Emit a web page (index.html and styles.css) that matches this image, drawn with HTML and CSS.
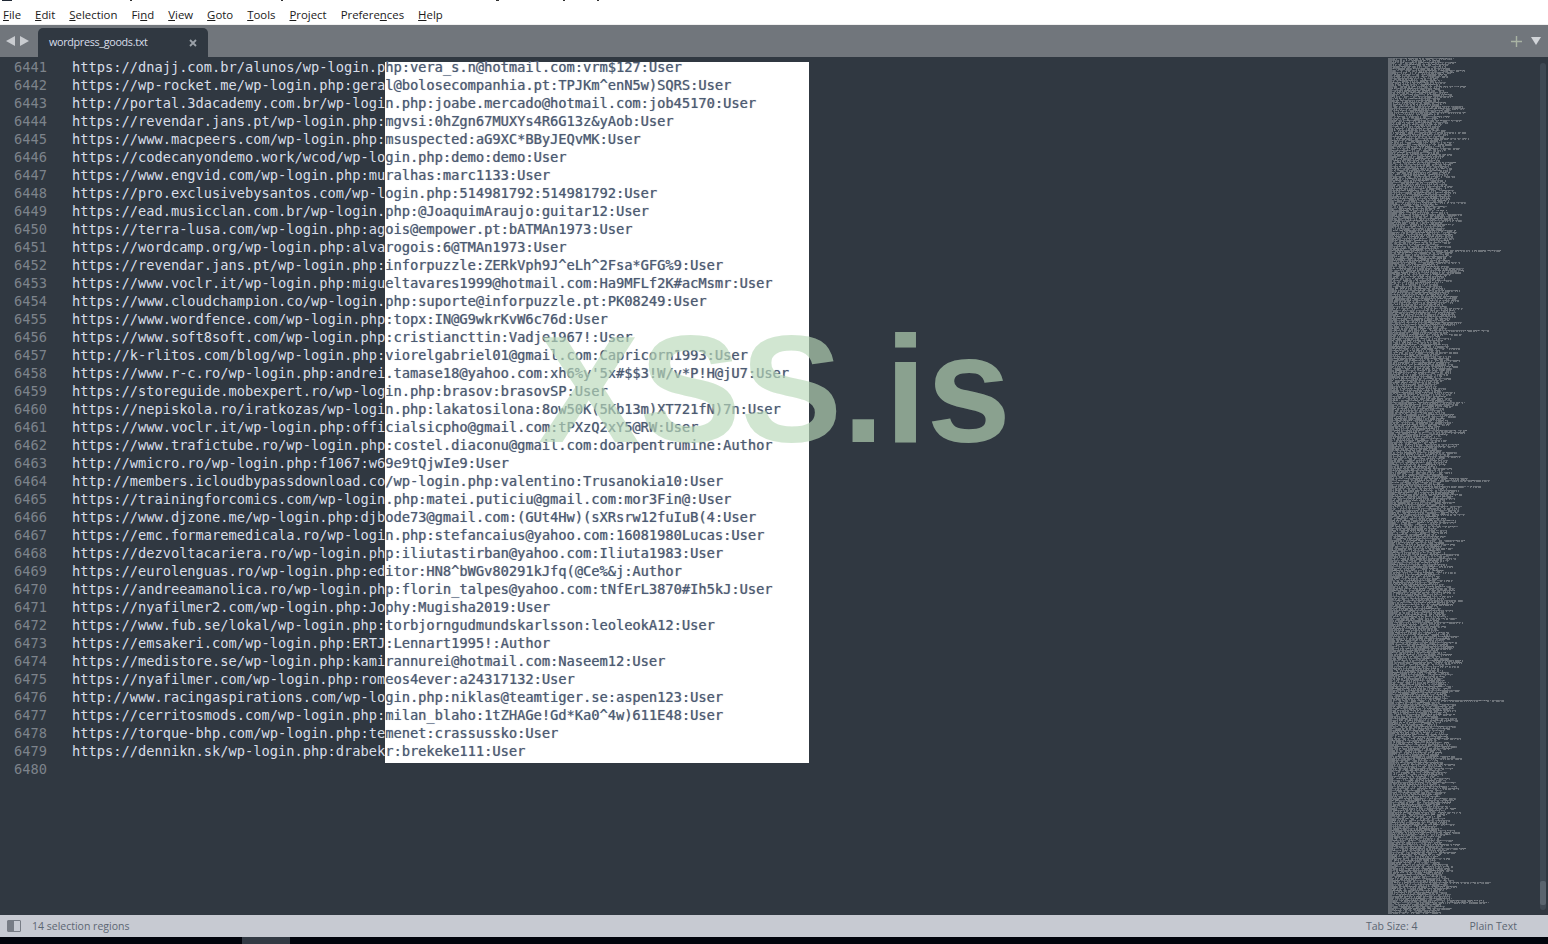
FILE: index.html
```html
<!DOCTYPE html>
<html lang="en">
<head>
<meta charset="utf-8">
<title>wordpress_goods.txt - Sublime Text</title>
<link rel="stylesheet" href="styles.css">
</head>
<body>
<div class="window">
  <div class="titlestrip"></div>
  <nav class="menubar">
    <span><u>F</u>ile</span><span><u>E</u>dit</span><span><u>S</u>election</span><span>Fi<u>n</u>d</span><span><u>V</u>iew</span><span><u>G</u>oto</span><span><u>T</u>ools</span><span><u>P</u>roject</span><span>Prefere<u>n</u>ces</span><span><u>H</u>elp</span>
  </nav>
  <div class="tabbar">
    <div class="tabnav">
      <svg width="9" height="10" viewBox="0 0 9 10"><path d="M9 0v10L0 5z"/></svg>
      <svg width="9" height="10" viewBox="0 0 9 10"><path d="M0 0v10l9-5z"/></svg>
    </div>
    <div class="tab"><span class="tabname">wordpress_goods.txt</span>
      <svg class="tabclose" width="8" height="8" viewBox="0 0 8 8"><path d="M1 1l6 6M7 1L1 7"/></svg>
    </div>
    <div class="tabactions">
      <svg class="tabplus" width="11" height="11" viewBox="0 0 11 11"><path d="M5.5 0v11M0 5.5h11"/></svg>
      <svg class="tabdrop" width="10" height="8" viewBox="0 0 10 8"><path d="M0 0h10L5 8z"/></svg>
    </div>
  </div>
  <main class="editor">
    <div class="selectionpanel"></div>
    <div class="lines">
      <div class="line"><span class="num">6441</span><span class="code">https://dnajj.com.br/alunos/wp-login.p<span class="over">hp:vera_s.n@hotmail.com:vrm$127:User</span></span></div>
      <div class="line"><span class="num">6442</span><span class="code">https://wp-rocket.me/wp-login.php:gera<span class="over">l@bolosecompanhia.pt:TPJKm^enN5w)SQRS:User</span></span></div>
      <div class="line"><span class="num">6443</span><span class="code">http://portal.3dacademy.com.br/wp-logi<span class="over">n.php:joabe.mercado@hotmail.com:job45170:User</span></span></div>
      <div class="line"><span class="num">6444</span><span class="code">https://revendar.jans.pt/wp-login.php:<span class="over">mgvsi:0hZgn67MUXYs4R6G13z&amp;yAob:User</span></span></div>
      <div class="line"><span class="num">6445</span><span class="code">https://www.macpeers.com/wp-login.php:<span class="over">msuspected:aG9XC*BByJEQvMK:User</span></span></div>
      <div class="line"><span class="num">6446</span><span class="code">https://codecanyondemo.work/wcod/wp-lo<span class="over">gin.php:demo:demo:User</span></span></div>
      <div class="line"><span class="num">6447</span><span class="code">https://www.engvid.com/wp-login.php:mu<span class="over">ralhas:marc1133:User</span></span></div>
      <div class="line"><span class="num">6448</span><span class="code">https://pro.exclusivebysantos.com/wp-l<span class="over">ogin.php:514981792:514981792:User</span></span></div>
      <div class="line"><span class="num">6449</span><span class="code">https://ead.musicclan.com.br/wp-login.<span class="over">php:@JoaquimAraujo:guitar12:User</span></span></div>
      <div class="line"><span class="num">6450</span><span class="code">https://terra-lusa.com/wp-login.php:ag<span class="over">ois@empower.pt:bATMAn1973:User</span></span></div>
      <div class="line"><span class="num">6451</span><span class="code">https://wordcamp.org/wp-login.php:alva<span class="over">rogois:6@TMAn1973:User</span></span></div>
      <div class="line"><span class="num">6452</span><span class="code">https://revendar.jans.pt/wp-login.php:<span class="over">inforpuzzle:ZERkVph9J^eLh^2Fsa*GFG%9:User</span></span></div>
      <div class="line"><span class="num">6453</span><span class="code">https://www.voclr.it/wp-login.php:migu<span class="over">eltavares1999@hotmail.com:Ha9MFLf2K#acMsmr:User</span></span></div>
      <div class="line"><span class="num">6454</span><span class="code">https://www.cloudchampion.co/wp-login.<span class="over">php:suporte@inforpuzzle.pt:PK08249:User</span></span></div>
      <div class="line"><span class="num">6455</span><span class="code">https://www.wordfence.com/wp-login.php<span class="over">:topx:IN@G9wkrKvW6c76d:User</span></span></div>
      <div class="line"><span class="num">6456</span><span class="code">https://www.soft8soft.com/wp-login.php<span class="over">:cristiancttin:Vadje1967!:User</span></span></div>
      <div class="line"><span class="num">6457</span><span class="code">http://k-rlitos.com/blog/wp-login.php:<span class="over">viorelgabriel01@gmail.com:Capricorn1993:User</span></span></div>
      <div class="line"><span class="num">6458</span><span class="code">https://www.r-c.ro/wp-login.php:andrei<span class="over">.tamase18@yahoo.com:xh6%y'5x#$$3!W/v*P!H@jU7:User</span></span></div>
      <div class="line"><span class="num">6459</span><span class="code">https://storeguide.mobexpert.ro/wp-log<span class="over">in.php:brasov:brasovSP:User</span></span></div>
      <div class="line"><span class="num">6460</span><span class="code">https://nepiskola.ro/iratkozas/wp-logi<span class="over">n.php:lakatosilona:8ow50K(5Kb13m)XT721fN)7n:User</span></span></div>
      <div class="line"><span class="num">6461</span><span class="code">https://www.voclr.it/wp-login.php:offi<span class="over">cialsicpho@gmail.com:tPXzQ2xY5@RW:User</span></span></div>
      <div class="line"><span class="num">6462</span><span class="code">https://www.trafictube.ro/wp-login.php<span class="over">:costel.diaconu@gmail.com:doarpentrumine:Author</span></span></div>
      <div class="line"><span class="num">6463</span><span class="code">http://wmicro.ro/wp-login.php:f1067:w6<span class="over">9e9tQjwIe9:User</span></span></div>
      <div class="line"><span class="num">6464</span><span class="code">http://members.icloudbypassdownload.co<span class="over">/wp-login.php:valentino:Trusanokia10:User</span></span></div>
      <div class="line"><span class="num">6465</span><span class="code">https://trainingforcomics.com/wp-login<span class="over">.php:matei.puticiu@gmail.com:mor3Fin@:User</span></span></div>
      <div class="line"><span class="num">6466</span><span class="code">https://www.djzone.me/wp-login.php:djb<span class="over">ode73@gmail.com:(GUt4Hw)(sXRsrw12fuIuB(4:User</span></span></div>
      <div class="line"><span class="num">6467</span><span class="code">https://emc.formaremedicala.ro/wp-logi<span class="over">n.php:stefancaius@yahoo.com:16081980Lucas:User</span></span></div>
      <div class="line"><span class="num">6468</span><span class="code">https://dezvoltacariera.ro/wp-login.ph<span class="over">p:iliutastirban@yahoo.com:Iliuta1983:User</span></span></div>
      <div class="line"><span class="num">6469</span><span class="code">https://eurolenguas.ro/wp-login.php:ed<span class="over">itor:HN8^bWGv80291kJfq(@Ce%&amp;j:Author</span></span></div>
      <div class="line"><span class="num">6470</span><span class="code">https://andreeamanolica.ro/wp-login.ph<span class="over">p:florin_talpes@yahoo.com:tNfErL3870#Ih5kJ:User</span></span></div>
      <div class="line"><span class="num">6471</span><span class="code">https://nyafilmer2.com/wp-login.php:Jo<span class="over">phy:Mugisha2019:User</span></span></div>
      <div class="line"><span class="num">6472</span><span class="code">https://www.fub.se/lokal/wp-login.php:<span class="over">torbjorngudmundskarlsson:leoleokA12:User</span></span></div>
      <div class="line"><span class="num">6473</span><span class="code">https://emsakeri.com/wp-login.php:ERTJ<span class="over">:Lennart1995!:Author</span></span></div>
      <div class="line"><span class="num">6474</span><span class="code">https://medistore.se/wp-login.php:kami<span class="over">rannurei@hotmail.com:Naseem12:User</span></span></div>
      <div class="line"><span class="num">6475</span><span class="code">https://nyafilmer.com/wp-login.php:rom<span class="over">eos4ever:a24317132:User</span></span></div>
      <div class="line"><span class="num">6476</span><span class="code">http://www.racingaspirations.com/wp-lo<span class="over">gin.php:niklas@teamtiger.se:aspen123:User</span></span></div>
      <div class="line"><span class="num">6477</span><span class="code">https://cerritosmods.com/wp-login.php:<span class="over">milan_blaho:1tZHAGe!Gd*Ka0^4w)611E48:User</span></span></div>
      <div class="line"><span class="num">6478</span><span class="code">https://torque-bhp.com/wp-login.php:te<span class="over">menet:crassussko:User</span></span></div>
      <div class="line"><span class="num">6479</span><span class="code">https://dennikn.sk/wp-login.php:drabek<span class="over">r:brekeke111:User</span></span></div>
      <div class="line"><span class="num">6480</span><span class="code"></span></div>
    </div>
    <canvas class="minimap" id="minimap" width="152" height="857"></canvas>
    <div class="scrolltrack"><div class="scrollthumb"></div></div>
    <div class="watermark">XSS.is</div>
  </main>
  <footer class="statusbar">
    <span class="panelicon"></span>
    <span class="statusleft">14 selection regions</span>
    <span class="tabsize">Tab Size: 4</span>
    <span class="syntax">Plain Text</span>
  </footer>
  <div class="taskbar"><span class="taskitem"></span><span class="clock">7:51</span></div>
</div>
<script src="script.js"></script>
</body>
</html>
```
FILE: styles.css
```css
* { box-sizing: border-box; }
html, body { margin: 0; height: 100%; overflow: hidden; }
.window { display: flex; flex-direction: column; width: 1548px; height: 944px; background: #303841; }

.titlestrip {
  height: 2px; flex: none; background-color: #fff;
  background-image:
    linear-gradient(#222a36, #222a36), linear-gradient(#333, #333), linear-gradient(#333, #333),
    linear-gradient(#333, #333), linear-gradient(#333, #333), linear-gradient(#333, #333);
  background-size: 10px 1px, 2px 1px, 2px 1px, 3px 1px, 2px 1px, 2px 1px;
  background-position: 2px 0, 130px 0, 281px 0, 496px 0, 563px 0, 597px 0;
  background-repeat: no-repeat;
}
.menubar {
  height: 23px; flex: none; display: flex; align-items: center; gap: 14px; padding: 3px 0 0 3px;
  background: #fff; border-bottom: 1px solid #f0f0f0;
  font: 11.4px "Open Sans", sans-serif; color: #1a1a1a;
}

.tabbar { height: 32px; flex: none; display: flex; align-items: flex-end; background: #71767c; }
.tabnav { width: 38px; height: 32px; flex: none; display: flex; align-items: center; gap: 5px; padding: 0 0 0 6px; }
.tabnav svg { fill: #c9ccd0; }
.tab {
  width: 170px; height: 29px; flex: none; display: flex; align-items: center; justify-content: space-between;
  padding: 0 11px 2px; background: #303841; border-radius: 5px 5px 0 0;
}
.tabname { font: 10.8px "Open Sans", sans-serif; letter-spacing: -.33px; color: #d8dee9; }
.tabclose { fill: none; stroke: #9ba1a8; stroke-width: 1.8; margin-top: 2px; }
.tabactions { margin-left: auto; height: 32px; display: flex; align-items: center; gap: 9px; padding-right: 7px; }
.tabplus { fill: none; stroke: #a9b3a4; stroke-width: 1.4; }
.tabdrop { fill: #d2d5d9; }

.editor { position: relative; flex: 1; min-height: 0; display: flex; overflow: hidden; background: #303841; }
.selectionpanel { position: absolute; left: 385px; top: 5px; width: 424px; height: 701px; background: #fff; }
.lines {
  position: relative; width: 1388px; flex: none; padding-top: 1px;
  font: 13.7px/18px "DejaVu Sans Mono", monospace; color: #d8dee9;
}
.line { display: flex; height: 18px; white-space: pre; }
.num { width: 47px; flex: none; text-align: right; color: #7d838b; }
.code { margin-left: 25px; }
.over { color: #4b5a72; text-shadow: .4px 0 .7px #7f8ea8; }
.minimap { width: 152px; height: 857px; flex: none; }
.scrolltrack { width: 6px; flex: none; margin: 6px 0 5px 0; background: #3f4953; border-radius: 3px; display: flex; flex-direction: column; justify-content: flex-end; padding-bottom: 5px; }
.scrollthumb { height: 24px; background: #5a646e; border-radius: 2px; }
.watermark {
  position: absolute; left: 538px; top: 256px;
  font: bold 152px/1 "Liberation Sans", Arial, sans-serif; color: rgb(186, 218, 186); opacity: .65;
  white-space: nowrap; pointer-events: none;
}

.statusbar {
  height: 22px; flex: none; display: flex; align-items: center; padding: 0 0 1px 7px; background: #c7cad2;
  font: 10.5px "Open Sans", sans-serif; color: #5c6673;
}
.panelicon { width: 14px; height: 12px; flex: none; margin-top: 1px; border: 1px solid #777c85; border-radius: 1px; background: linear-gradient(90deg, #777c85 50%, transparent 50%); }
.statusleft { margin-left: 11px; }
.tabsize { margin-left: auto; }
.syntax { margin-left: 52px; margin-right: 31px; }

.taskbar { height: 7px; flex: none; display: flex; background: #02040c; overflow: hidden; position: relative; }
.taskitem { width: 48px; height: 7px; margin-left: 242px; background: #333a44; }
.clock { margin-left: 1163px; font: 11px/11px "Open Sans", sans-serif; color: #e8e8e8; padding-top: 5px; }
```
FILE: script.js
```js
(function () {
  var c = document.getElementById('minimap').getContext('2d');
  var state = 20240611;
  function rnd() {
    state = (state + 0x6D2B79F5) | 0;
    var t = Math.imul(state ^ (state >>> 15), 1 | state);
    t = (t + Math.imul(t ^ (t >>> 7), 61 | t)) ^ t;
    return ((t ^ (t >>> 14)) >>> 0) / 4294967296;
  }
  for (var y = 1; y < 856; y += 2) {
    var w = 48 + rnd() * 20 + (rnd() > .6 ? rnd() * 14 : 0);
    if (rnd() > .985) w = 92 + rnd() * 24;
    c.fillStyle = '#666c73';
    c.fillRect(0, y, 4, 2);
    for (var x = 4; x < w; x++) {
      var n = rnd();
      if (n < .1) continue;
      c.fillStyle = n < .5 ? '#6d7379' : n < .88 ? '#5f656d' : '#7c8187';
      c.fillRect(x, y, 1, 1 + (n < .6 ? 1 : 0));
    }
  }
})();
```
